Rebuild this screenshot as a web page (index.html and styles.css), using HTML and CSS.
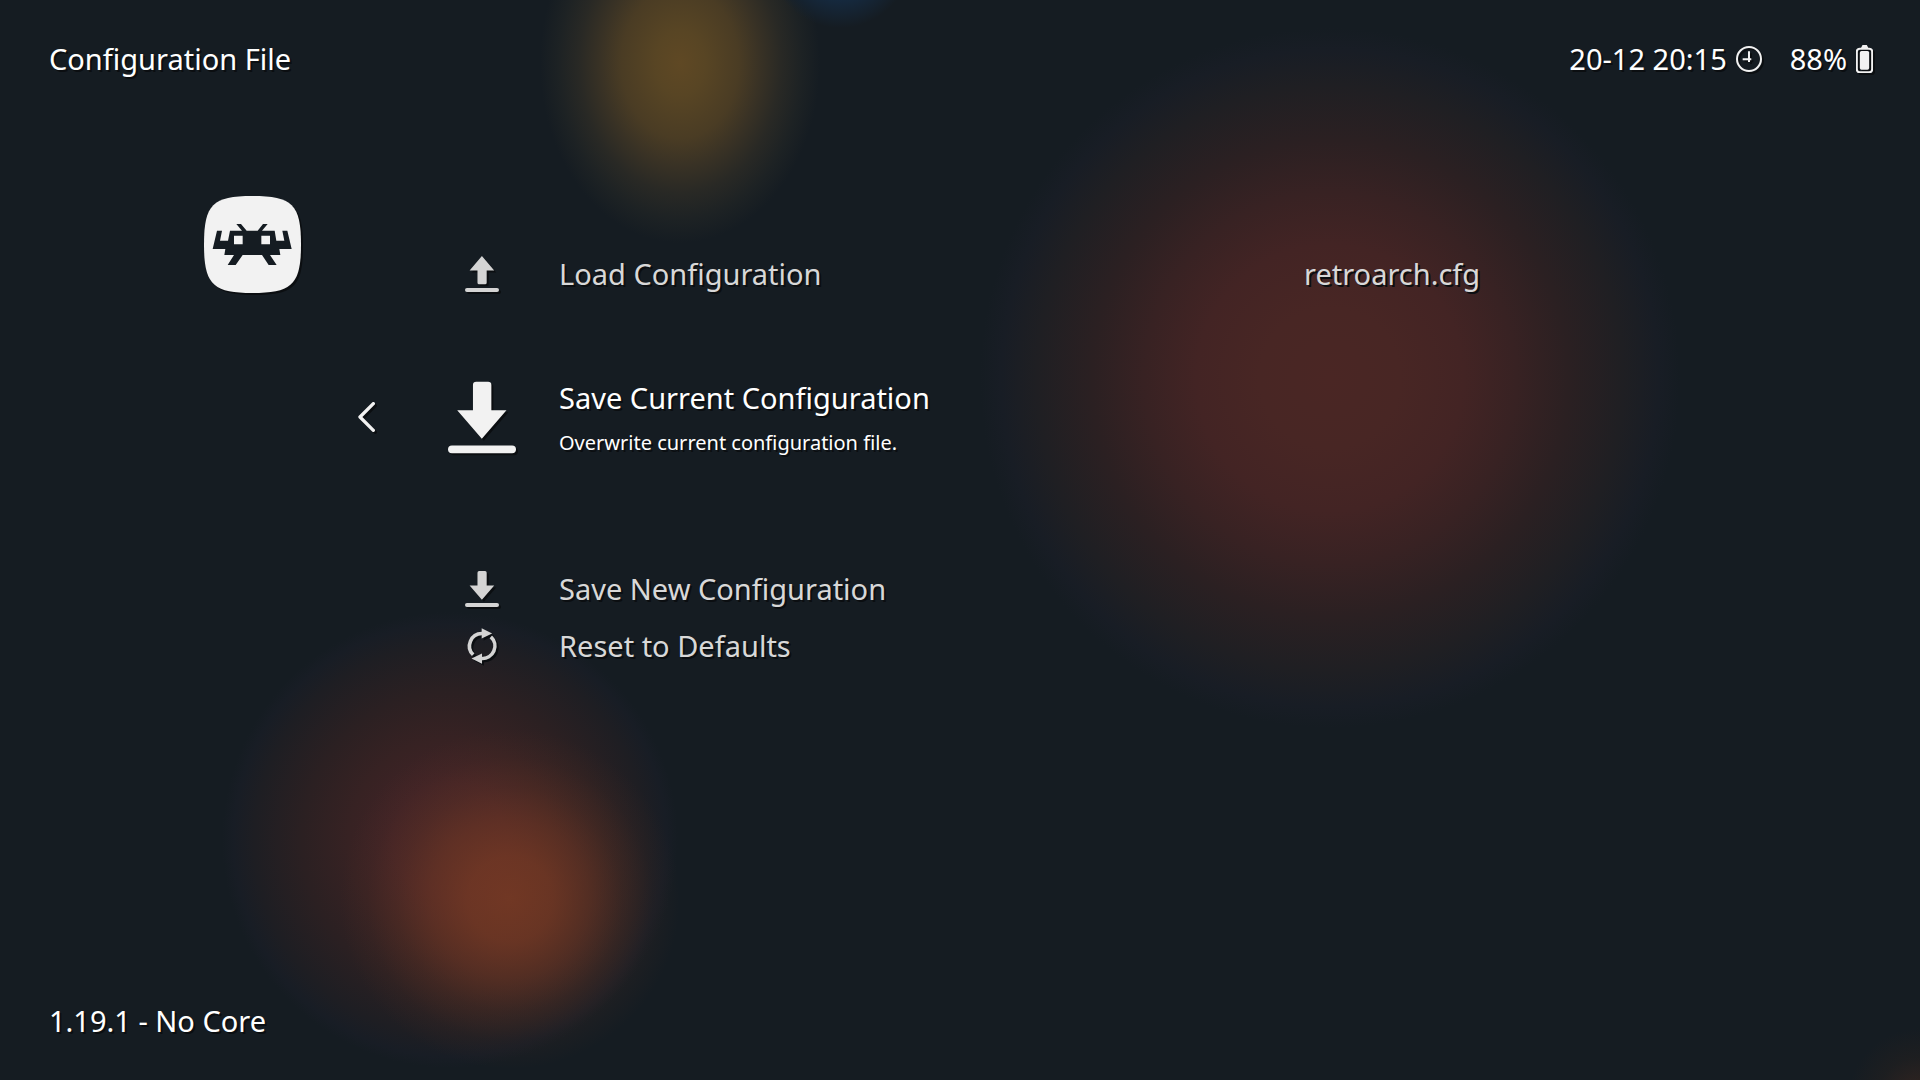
FILE: index.html
```html
<!DOCTYPE html>
<html lang="en">
<head>
<meta charset="utf-8">
<meta name="viewport" content="width=device-width, initial-scale=1">
<title>Configuration File</title>
<link rel="stylesheet" href="styles.css">
</head>
<body>
<svg class="defs" aria-hidden="true">
  <symbol id="download" viewBox="0 0 207 218">
    <path d="M76 10Q76 0 86 0H122Q132 0 132 10V87H178L103 174L28 87H76Z"/>
    <rect x="0" y="194" width="207" height="24" rx="12"/>
  </symbol>
  <symbol id="upload" viewBox="0 0 207 218">
    <path d="M103 0L178 87H132V162Q132 172 122 172H86Q76 172 76 162V87H28Z"/>
    <rect x="0" y="194" width="207" height="24" rx="12"/>
  </symbol>
</svg>
<header class="bar">
  <h1 class="title">Configuration File</h1>
  <div class="status">
    <time class="clock">20-12 20:15
      <svg width="26" height="26" viewBox="590 48 78 78" aria-hidden="true"><circle cx="629" cy="87" r="36" class="line thin"/><path d="M629 64V96M610 88H636" class="line thin"/></svg>
    </time>
    <span class="battery">88%
      <svg width="17" height="28" viewBox="949 42 50 84" aria-hidden="true"><rect x="951" y="53" width="46" height="71" rx="9" class="line thin"/><path d="M963 52L968 42H981L986 52Z"/><rect x="960" y="60" width="28" height="56" rx="5"/></svg>
    </span>
  </div>
</header>
<main class="main">
  <aside class="side">
    <svg class="logo" viewBox="43 48 291 291" role="img" aria-label="RetroArch">
      <path d="M188 48C308 48 334 74 334 193C334 313 308 339 188 339C69 339 43 313 43 193C43 74 69 48 188 48Z"/>
      <path class="ink" fill-rule="evenodd" d="M82 152H97L91 182H115L121 152H157L140 132H154L171 152H204L220 132H234L217 152H255L260 182H284L278 152H293L306 207H269L272 225H241L261 255H237L217 225H159L138 255H114L133 225H104L107 207H69ZM133 167V193H159V167ZM215 167V193H241V167Z"/>
    </svg>
  </aside>
  <ul class="list">
    <li class="row">
      <button class="item" type="button">
        <svg class="icon" aria-hidden="true"><use href="#upload"/></svg>
        <span class="label">Load Configuration</span>
        <span class="value">retroarch.cfg</span>
      </button>
    </li>
    <li class="row selected">
      <button class="back" type="button" aria-label="Back">
        <svg width="18" height="30" viewBox="0 0 54 90" aria-hidden="true"><path d="M46 5L6 45L46 85" class="line chevron"/></svg>
      </button>
      <button class="item" type="button">
        <svg class="icon" aria-hidden="true"><use href="#download"/></svg>
        <span class="text"><span class="label">Save Current Configuration</span><span class="sub">Overwrite current configuration file.</span></span>
      </button>
    </li>
    <li class="row">
      <button class="item" type="button">
        <svg class="icon" aria-hidden="true"><use href="#download"/></svg>
        <span class="label">Save New Configuration</span>
      </button>
    </li>
    <li class="row">
      <button class="item" type="button">
        <svg class="icon" viewBox="76 225 104 108" aria-hidden="true"><path class="line arc" d="M101 306A38 38 0 0 1 128 241M155 251A38 38 0 0 1 126 317"/><path d="M127 225L159 241L127 256ZM128 302L96 317L128 333Z"/></svg>
        <span class="label">Reset to Defaults</span>
      </button>
    </li>
  </ul>
</main>
<footer class="bar">1.19.1 - No Core</footer>
</body>
</html>
```
FILE: styles.css
```css
* { box-sizing: border-box; }
body {
  margin: 0;
  min-height: 100vh;
  display: flex;
  flex-direction: column;
  font-family: "Noto Sans", "Open Sans", sans-serif;
  font-size: 29px;
  font-weight: 400;
  line-height: 56px;
  color: #fff;
  text-shadow: 2px 2px 0 #0b0e11;
  background:
    radial-gradient(circle 72px at 100% 1100px, #38261f, #2e2320cc 30%, #24201f88 60%, #1f1f2300),
    radial-gradient(circle 72px at 840px -44px, #163254, #152a40 58%, #15222f 82%, #15222f00),
    radial-gradient(ellipse 140px 180px at 680px 63px, #5f4824 0%, #584524 18%, #4a3c24 42%, #393225 57%, #292925 72%, #1d2224 87%, #181d2500 100%),
    radial-gradient(circle 170px at 510px 899px, #7d3c24d0 0%, #7d3c24b8 25%, #7d3c247c 47%, #7a3c2440 66%, #703a2416 84%, #703a2400 100%),
    radial-gradient(circle 228px at 450px 840px, #442526 0%, #402326 25%, #372223 44%, #2b2022 65%, #1e1e23 86%, #181d25 95%, #181d2500 100%),
    radial-gradient(circle 350px at 1330px 378px, #4a2624 0%, #482624 20%, #432424 38%, #382223 53%, #2b2022 68%, #1f1f23 84%, #181d25 94%, #181d2500 100%),
    #151c22;
}
svg {
  fill: #f2f2f2;
  filter: drop-shadow(2px 2px 0 #0b0e11);
  flex: none;
}
.defs { display: none; }
.line { fill: none; stroke: #f2f2f2; }
.thin { stroke-width: 6; }
.arc { stroke: #d4d4d4; stroke-width: 11; }
.chevron { stroke-width: 10; stroke-linecap: round; stroke-linejoin: round; }
.ink { fill: #151c22; }

.bar {
  display: flex;
  align-items: center;
  justify-content: space-between;
  height: 118px;
  padding: 0 47px 0 49px;
}
.title { margin: 0; font: inherit; }
.status, .clock, .battery { display: flex; align-items: center; }
.status { gap: 28px; }
.clock, .battery { gap: 9px; }

.main { flex: 1; display: flex; }
.side { width: 358px; padding: 78px 0 0 204px; line-height: 0; }
.logo { width: 97px; height: 97px; }

.list { flex: 1; list-style: none; margin: 0; padding: 127px 25px 0 0; }
.row { display: grid; grid-template-columns: 90px 1fr; align-items: center; }
button {
  font: inherit;
  color: inherit;
  text-shadow: inherit;
  background: none;
  border: 0;
  padding: 0;
  text-align: left;
  cursor: pointer;
}
.back { display: flex; }
.item {
  grid-column: 2;
  display: grid;
  grid-template-columns: 68px 4fr 3fr;
  align-items: center;
  min-height: 57px;
  color: #d8d8d8;
}
.icon { width: 34px; height: 36px; fill: #d4d4d4; justify-self: center; }
.label, .sub { display: block; }
.item > .label, .text { padding-left: 43px; }
.selected { margin: 68px 0 96px; }
.selected .item { color: #fff; }
.selected .icon { width: 68px; height: 73px; fill: #f2f2f2; }
.text { padding-bottom: 4px; }
.sub { font-size: 20px; line-height: 34px; }
```
